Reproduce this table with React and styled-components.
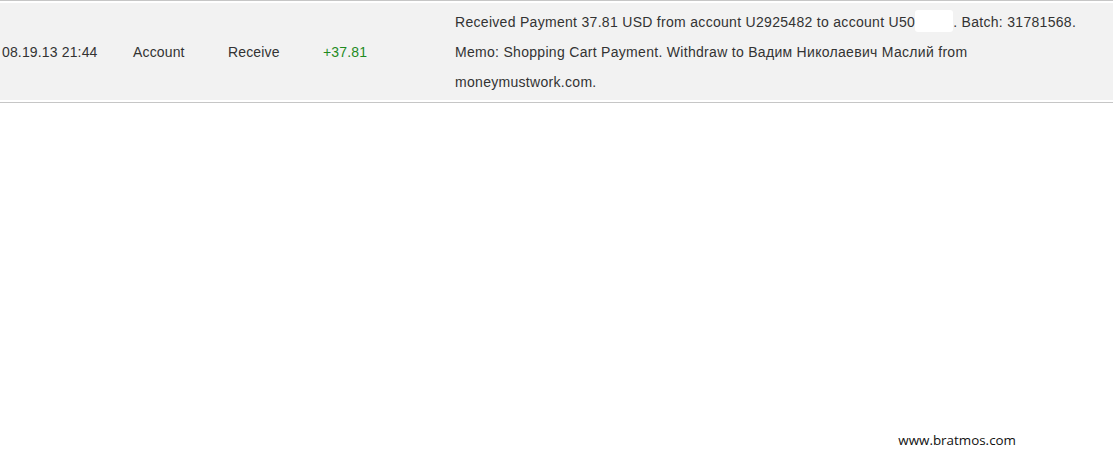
import React from 'react';
import styled, { createGlobalStyle } from 'styled-components';

const GlobalStyle = createGlobalStyle`
  html, body {
    margin: 0;
    padding: 0;
    background: #ffffff;
  }
`;

const Page = styled.div`
  display: flex;
  flex-direction: column;
  min-height: 460px;
  font-family: "Liberation Sans", Arial, sans-serif;
`;

const HistoryTable = styled.table`
  width: 100%;
  table-layout: fixed;
  border-collapse: separate;
  border-spacing: 0 2px;
  border-top: 1px solid #c6c6c6;
  border-bottom: 1px solid #c6c6c6;
`;

const Row = styled.tr`
  background: #f2f2f2;
`;

const Cell = styled.td`
  width: ${(p) => (p.$width ? `${p.$width}px` : 'auto')};
  height: 97px;
  box-sizing: border-box;
  padding: 4px ${(p) => p.$padRight || 0}px 3px 2px;
  font-size: 14px;
  letter-spacing: ${(p) => (p.$wrap ? '0.3px' : '0.15px')};
  line-height: 30px;
  color: ${(p) => (p.$positive ? '#1f8a1f' : '#333333')};
  vertical-align: middle;
  white-space: ${(p) => (p.$wrap ? 'normal' : 'nowrap')};
`;

const Redacted = styled.span`
  display: inline-block;
  width: 38px;
  height: 22px;
  vertical-align: -5px;
  background: #ffffff;
  border-radius: 3px;
`;

const Footer = styled.div`
  margin-top: auto;
  display: flex;
  justify-content: flex-end;
  padding: 0 97px 11px 0;
  font-family: "Open Sans", "DejaVu Sans", sans-serif;
  font-size: 13.4px;
  color: #111;
`;

export default function App() {
  return (
    <>
      <GlobalStyle />
      <Page>
        <HistoryTable>
          <tbody>
            <Row>
              <Cell $width={131}>08.19.13 21:44</Cell>
              <Cell $width={95}>Account</Cell>
              <Cell $width={95}>Receive</Cell>
              <Cell $width={132} $positive>+37.81</Cell>
              <Cell $wrap $padRight={24}>
                Received Payment 37.81 USD from account U2925482 to account U50<Redacted />. Batch: 31781568.
                Memo: Shopping Cart Payment. Withdraw to Вадим Николаевич Маслий from moneymustwork.com.
              </Cell>
            </Row>
          </tbody>
        </HistoryTable>
        <Footer>www.bratmos.com</Footer>
      </Page>
    </>
  );
}
